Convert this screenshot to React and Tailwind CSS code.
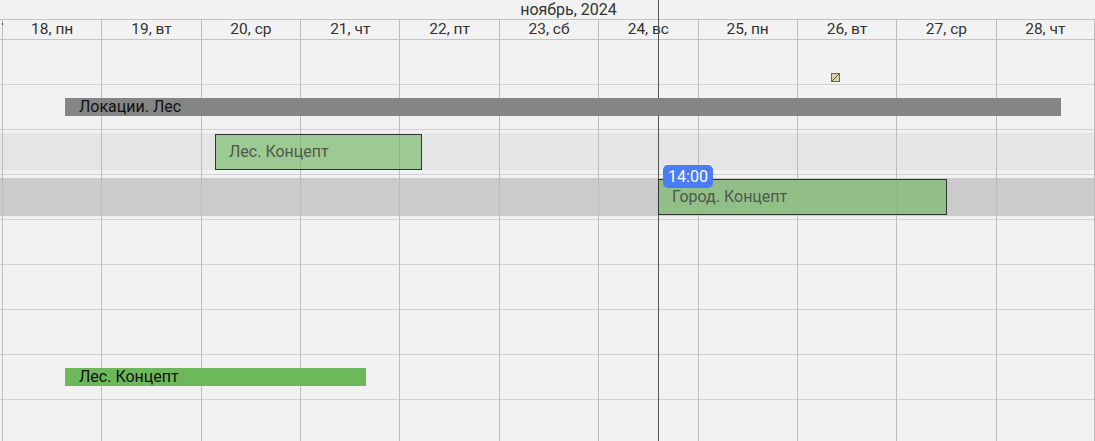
import React from "react";

const days = ["18, пн", "19, вт", "20, ср", "21, чт", "22, пт", "23, сб", "24, вс", "25, пн", "26, вт", "27, ср", "28, чт"];

function Columns({ header }) {
  return (
    <div className="flex h-full">
      <div className="w-[2px] shrink-0 relative">
        {header && <span className="absolute left-[2px] top-[3px] w-px h-[2px] bg-[#333]" />}
      </div>
      {days.map((d, i) => (
        <div
          key={d}
          className={
            "w-[99.36px] shrink-0 border-l border-[#bdbdbd] flex items-center justify-center text-[15.5px] leading-none text-[#333] " +
            (i === days.length - 1 ? "border-r" : "")
          }
        >
          {header ? d : null}
        </div>
      ))}
    </div>
  );
}

export default function App() {
  const rows = [0, 1, 2, 3, 4, 5, 6, 7, 8];
  return (
    <div className="w-[1095px] h-[441px] bg-[#f2f2f2] relative overflow-hidden font-['Roboto',sans-serif] text-[#333]">
      <div className="h-[19px] flex items-center justify-center pl-[42px] text-[16px] leading-none text-[#333]">
        ноябрь, 2024
      </div>
      <div className="h-[21px] border-y border-[#c4c4c4]">
        <Columns header />
      </div>
      <div className="relative">
        {rows.map((r) => (
          <div key={r} className="h-[45px] pt-[3px] border-b border-[#d0d0d0]">
            {r === 2 && <div className="h-[37px] bg-[#e5e5e5]" />}
            {r === 3 && <div className="h-[38px] bg-[#cbcbcb]" />}
          </div>
        ))}
        <div className="absolute inset-0 pointer-events-none">
          <Columns />
        </div>
      </div>

      {/* current time line */}
      <div className="absolute left-[658px] top-0 h-full w-px bg-[#555]" />

      {/* timeline events (placed on the time canvas) */}
      <div className="absolute left-[831px] top-[73px] w-[9px] h-[9px] border border-[#666] bg-[#d8d69a]">
        <svg width="7" height="7" viewBox="0 0 7 7" className="block">
          <line x1="0" y1="7" x2="7" y2="0" stroke="#555" strokeWidth="1" />
        </svg>
      </div>

      <div className="absolute left-[65px] top-[98px] w-[996px] h-[18px] bg-[#858585] pl-[14px] text-[16px] leading-[18px] text-[#111]">
        Локации. Лес
      </div>

      <div className="absolute left-[215px] top-[134px] w-[207px] h-[36px] border border-[#333] bg-[#6cb85a]/60 pl-[13px] flex items-center text-[16px] text-[#4f584c]">
        Лес. Концепт
      </div>

      <div className="absolute left-[658px] top-[179px] w-[289px] h-[36px] border border-[#333] bg-[#6cb85a]/60 pl-[13px] flex items-center text-[16px] text-[#4f584c]">
        Город. Концепт
      </div>

      <div className="absolute left-[663px] top-[165px] w-[50px] h-[23px] rounded-[5px] bg-[#4a7cf8] flex items-center justify-center text-[16px] text-white">
        14:00
      </div>

      <div className="absolute left-[65px] top-[368px] w-[301px] h-[18px] bg-[#6cb85a] pl-[14px] text-[16px] leading-[18px] text-[#111]">
        Лес. Концепт
      </div>
    </div>
  );
}
